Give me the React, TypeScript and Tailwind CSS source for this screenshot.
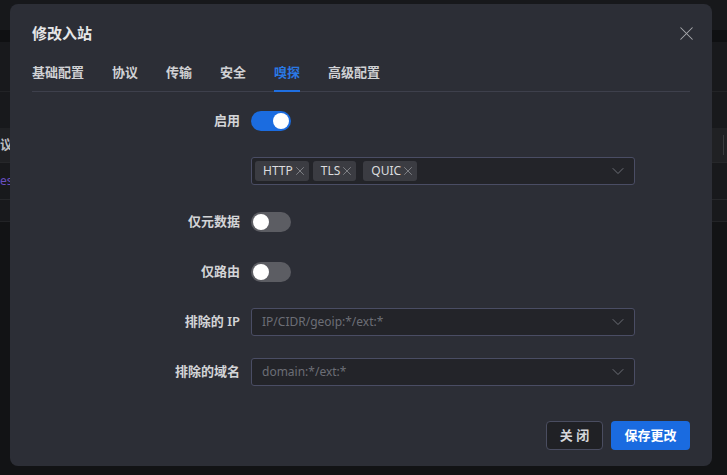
import { X, ChevronDown } from 'lucide-react'

const font = { fontFamily: '"Noto Sans", "Noto Sans CJK SC", sans-serif' }

function Toggle({ on }: { on: boolean }) {
  return (
    <div
      className={`flex h-[20px] w-[40px] items-center rounded-full px-[2px] ${
        on ? 'justify-end bg-[#1b6ce0]' : 'justify-start bg-[#5c5d63]'
      }`}
    >
      <div className="h-[16px] w-[16px] rounded-full bg-white" />
    </div>
  )
}

function Tag({ label }: { label: string }) {
  return (
    <span className="flex h-[20px] items-center rounded-[3px] bg-[#3b3c42] pl-[8px] pr-[2px] text-[12px] text-[#dcdcde]">
      {label}
      <X size={14} strokeWidth={1.2} className="text-[#9b9ca1]" />
    </span>
  )
}

function Row({ label, h, children }: { label: string; h: string; children: React.ReactNode }) {
  return (
    <div className={`flex items-center ${h}`}>
      <div className="w-[219px] pr-[11px] text-right text-[13px] font-semibold text-[#d3d4d7]">{label}</div>
      {children}
    </div>
  )
}

function SelectBox({ children }: { children: React.ReactNode }) {
  return (
    <div className="flex h-[28px] w-[384px] items-center rounded-[3px] border border-[#4a4d64] bg-[#232429] pr-[6px]">
      <div className="flex flex-1 items-center">{children}</div>
      <ChevronDown size={20} strokeWidth={1} className="text-[#7b7d86]" />
    </div>
  )
}

const tabs = ['基础配置', '协议', '传输', '安全', '嗅探', '高级配置']

export default function App() {
  return (
    <div className="relative h-[475px] w-[727px] overflow-hidden bg-[#121315]" style={font}>
      {/* 背景のページ（暗幕越し） */}
      <div className="flex flex-col">
        <div className="h-[30px] bg-[#17181b]" />
        <div className="h-[12px] bg-[#0f1012]" />
        <div className="h-[50px] border-b border-[#222326] bg-[#18191c]" />
        <div className="h-[36px] bg-[#18191c]" />
        <div className="flex h-[35px] items-center justify-between border-b border-[#26272a] bg-[#202124]">
          <span className="text-[13px] font-semibold text-[#bdbec1]">议</span>
          <span className="mr-[3px] h-[20px] w-px bg-[#3a3b3e]" />
        </div>
        <div className="flex h-[37px] items-center border-b border-[#26272a] bg-[#18191c]">
          <span className="text-[12px] text-[#6a4fc0]">es</span>
        </div>
        <div className="h-[22px] border-b border-[#222326] bg-[#18191c]" />
      </div>

      {/* モーダル */}
      <div className="absolute left-[10px] top-[4px] flex h-[462px] w-[702px] flex-col rounded-lg bg-[#2c2e36] px-[22px]">
        <div className="mt-[19px] flex h-[20px] items-center justify-between">
          <h2 className="text-[15px] font-semibold leading-[20px] text-[#e6e6e8]">修改入站</h2>
          <X size={23} strokeWidth={1.1} className="-mr-[8px] text-[#a8a9ad]" />
        </div>

        <div className="mt-[19px] flex gap-[28px] border-b border-[#3e404c]">
          {tabs.map((t) => (
            <div
              key={t}
              className={`relative pb-[9px] text-[13px] font-semibold leading-[20px] ${
                t === '嗅探' ? 'text-[#2a78e4]' : 'text-[#d0d1d4]'
              }`}
            >
              {t}
              {t === '嗅探' && <div className="absolute -bottom-px left-0 h-[2px] w-full bg-[#1f6fe2]" />}
            </div>
          ))}
        </div>

        <div className="mt-[4px] flex flex-col">
          <Row label="启用" h="h-[50px]">
            <Toggle on />
          </Row>
          <Row label="" h="h-[50px]">
            <SelectBox>
              <div className="flex items-center gap-[4px] pl-[3px]">
                <Tag label="HTTP" />
                <Tag label="TLS" />
                <div className="ml-[3px]">
                  <Tag label="QUIC" />
                </div>
              </div>
            </SelectBox>
          </Row>
          <Row label="仅元数据" h="h-[51px]">
            <Toggle on={false} />
          </Row>
          <Row label="仅路由" h="h-[50px]">
            <Toggle on={false} />
          </Row>
          <Row label="排除的 IP" h="h-[50px]">
            <SelectBox>
              <span className="pl-[10px] text-[12px] text-[#6c6e76]">IP/CIDR/geoip:*/ext:*</span>
            </SelectBox>
          </Row>
          <Row label="排除的域名" h="h-[50px]">
            <SelectBox>
              <span className="pl-[10px] text-[12px] text-[#6c6e76]">domain:*/ext:*</span>
            </SelectBox>
          </Row>
        </div>

        <div className="mt-[24px] flex justify-end gap-[8px]">
          <button className="h-[29px] w-[57px] rounded-[4px] border border-[#4a4d60] bg-[#202125] text-[13px] font-semibold text-[#d6d7da]">
            关 闭
          </button>
          <button className="h-[29px] w-[79px] rounded-[4px] bg-[#1a6be0] text-[13px] font-semibold text-white">
            保存更改
          </button>
        </div>
      </div>
    </div>
  )
}
